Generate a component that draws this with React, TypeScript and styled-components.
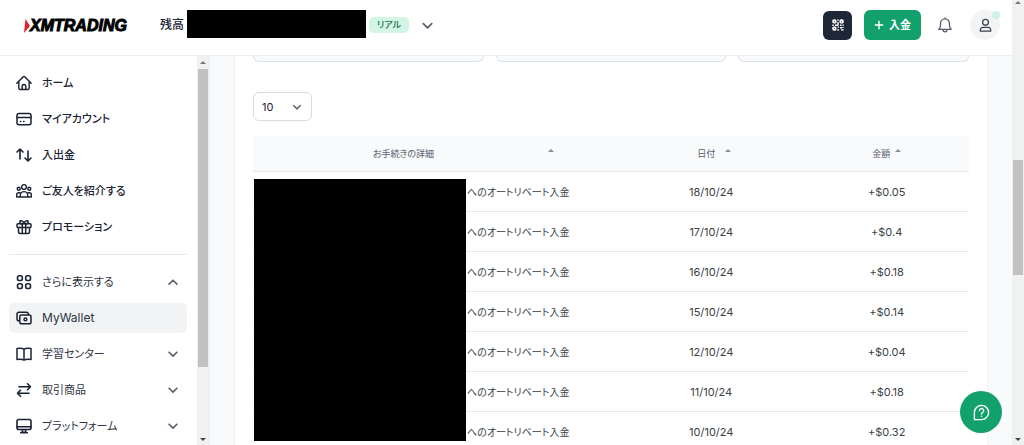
import React from "react";
import styled, { createGlobalStyle } from "styled-components";

const ink = "#1b2233";
const green = "#12a06d";
const line = "#e7e9ec";

const GlobalStyle = createGlobalStyle`
  * { box-sizing: border-box; }
  body {
    margin: 0;
    background: #fff;
    color: ${ink};
    font-family: Inter, "Noto Sans CJK JP", sans-serif;
    font-size: 12px;
    line-height: 16px;
    font-feature-settings: "palt";
  }
  button, select, input { font: inherit; color: inherit; font-feature-settings: inherit; }
  button { border: 0; padding: 0; background: none; cursor: pointer; }
  a { color: inherit; text-decoration: none; }
`;

const Page = styled.div`
  display: flex;
  height: 100vh;
  overflow: hidden;
`;

const AppColumn = styled.div`
  flex: 1;
  min-width: 0;
  display: flex;
  flex-direction: column;
`;

const Header = styled.header`
  flex: none;
  display: flex;
  align-items: center;
  height: 56px;
  padding: 0 12px 5px 24px;
  border-bottom: 1px solid #eceef1;
`;

const Logo = styled.a`
  display: flex;
  align-items: center;
  width: 136px;
  padding-top: 2px;
  font-family: "Liberation Sans", sans-serif;
  font-size: 16px;
  font-weight: 700;
  font-style: italic;
  color: #000;
  -webkit-text-stroke: 1px #000;
`;

const Account = styled.div`
  display: flex;
  align-items: center;
  gap: 3px;
  font-weight: 500;
`;

const BalanceMask = styled.span`
  width: 179px;
  height: 28px;
  margin-top: -2px;
  background: #000;
`;

const Badge = styled.span`
  padding: 0 8px;
  border-radius: 5px;
  background: #d3f5e5;
  color: #1d6b50;
  font-size: 9px;
  font-weight: 500;
`;

const Toggle = styled.button`
  display: flex;
  margin-left: 8px;
`;

const Actions = styled.div`
  display: flex;
  align-items: center;
  gap: 12px;
  margin-left: auto;
`;

const QrButton = styled.button`
  display: grid;
  place-items: center;
  width: 29px;
  height: 29px;
  border-radius: 6px;
  background: #1e2737;
`;

const DepositButton = styled.button`
  display: flex;
  align-items: center;
  justify-content: center;
  gap: 5px;
  width: 57px;
  height: 30px;
  border-radius: 6px;
  background: ${green};
  color: #fff;
  font-weight: 700;
  font-size: 11px;
`;

const BellButton = styled.button`
  display: grid;
  place-items: center;
  width: 24px;
  height: 24px;
  margin-right: 1px;
`;

const Avatar = styled.button`
  position: relative;
  display: grid;
  place-items: center;
  width: 30px;
  height: 30px;
  border-radius: 50%;
  background: #f3f4f5;
`;

const StatusDot = styled.span`
  position: absolute;
  top: 1px;
  right: 0;
  width: 8px;
  height: 8px;
  border-radius: 50%;
  background: #cff3e2;
`;

const Body = styled.div`
  flex: 1;
  min-height: 0;
  display: flex;
`;

const Sidebar = styled.aside`
  flex: none;
  display: flex;
  width: 210px;
  border-right: 1px solid #e9ecf0;
`;

const Nav = styled.nav`
  flex: 1;
  display: flex;
  flex-direction: column;
  overflow: hidden;
  padding: 12px 10px 0 9px;
`;

const NavList = styled.ul`
  display: flex;
  flex-direction: column;
  gap: 6px;
  margin: 0;
  padding: 0;
  list-style: none;
`;

const Divider = styled.hr`
  flex: none;
  width: 100%;
  height: 1px;
  margin: 12px 0;
  border: 0;
  background: ${line};
`;

const NavLink = styled.a<{ $active?: boolean; $strong?: boolean }>`
  display: flex;
  align-items: center;
  gap: 10px;
  height: 30px;
  padding: 0 7px;
  border-radius: 5px;
  background: ${(p) => (p.$active ? "#f1f3f5" : "transparent")};
  color: ${(p) => (p.$strong ? ink : "#2f3542")};
  font-weight: ${(p) => (p.$strong ? 500 : 400)};
`;

const NavLabel = styled.span<{ $latin?: boolean }>`
  flex: 1;
  font-size: ${(p) => (p.$latin ? 12 : 11)}px;
`;

const Track = styled.div<{ $width: number; $lead: number }>`
  flex: none;
  display: flex;
  flex-direction: column;
  align-items: center;
  width: ${(p) => p.$width}px;
  padding: ${(p) => p.$lead}px 0 3px;
  background: #f0f1f1;
`;

const Runway = styled.div`
  flex: 1;
  display: flex;
  flex-direction: column;
  align-items: center;
  align-self: stretch;
  margin: 5px 0;
`;

const Space = styled.div<{ $grow: number }>`
  flex: ${(p) => p.$grow} 0 0;
`;

const Thumb = styled.div<{ $grow: number }>`
  flex: ${(p) => p.$grow} 0 0;
  width: 10px;
  background: #c1c1c1;
`;

const Main = styled.main`
  flex: 1;
  min-width: 0;
  overflow: hidden;
  padding: 0 24px;
  background: #f8fafc;
`;

const Card = styled.section`
  min-height: 100%;
  padding: 0 18px;
  border: solid #f0f2f5;
  border-width: 0 1px;
  background: #fff;
`;

const Filters = styled.div`
  display: grid;
  grid-template-columns: repeat(3, 1fr);
  gap: 12px;
`;

const FilterEdge = styled.div`
  height: 6px;
  border: 1px solid #dfe3e8;
  border-top: 0;
  border-radius: 0 0 6px 6px;
  background: #f8fafc;
`;

const PageSize = styled.label`
  display: grid;
  align-items: center;
  width: 59px;
  margin: 30px 0 15px;
`;

const PageSizeSelect = styled.select`
  grid-area: 1 / 1;
  appearance: none;
  height: 29px;
  padding: 0 8px;
  border: 1px solid #d9dce1;
  border-radius: 6px;
  background: #fff;
  font-size: 11px;
`;

const SelectArrow = styled.span`
  grid-area: 1 / 1;
  justify-self: end;
  display: flex;
  padding-right: 9px;
  pointer-events: none;
`;

const TableArea = styled.div`
  position: relative;
`;

const Table = styled.table`
  width: 100%;
  border-collapse: separate;
  border-spacing: 0;
  table-layout: fixed;
`;

const HeadCell = styled.th<{ $share: number }>`
  width: ${(p) => p.$share}%;
  height: 36px;
  padding: 0;
  border-bottom: 1px solid ${line};
  background: #f8fafc;
  color: #59616e;
  font-size: 9px;
  font-weight: 400;
`;

const SortButton = styled.button<{ $wide?: boolean; $gap?: number; $inset?: number }>`
  display: flex;
  align-items: center;
  justify-content: center;
  gap: ${(p) => p.$gap ?? 10}px;
  width: ${(p) => (p.$wide ? "301px" : "100%")};
  padding-left: ${(p) => p.$inset ?? 0}px;
`;

const SortLabel = styled.span<{ $fill?: boolean }>`
  flex: ${(p) => (p.$fill ? 1 : "none")};
`;

const SortArrow = styled.span`
  display: flex;
  padding-bottom: 8px;
`;

const Cell = styled.td<{ $detail?: boolean }>`
  height: 40px;
  padding: 0 0 0 ${(p) => (p.$detail ? 214 : 0)}px;
  border-bottom: 1px solid ${line};
  color: #3a3f47;
  font-size: ${(p) => (p.$detail ? 10 : 11)}px;
  text-align: ${(p) => (p.$detail ? "left" : "center")};
`;

const DetailMask = styled.div`
  position: absolute;
  top: 43px;
  left: 1px;
  width: 212px;
  height: 262px;
  background: #000;
`;

const HelpButton = styled.button`
  position: fixed;
  right: 22px;
  bottom: 12px;
  display: grid;
  place-items: center;
  width: 42px;
  height: 42px;
  border-radius: 50%;
  background: ${green};
`;

type DrawingProps = { children: React.ReactNode; size?: number; color?: string; weight?: number };

const Drawing = ({ children, size = 16, color = ink, weight = 1.4 }: DrawingProps) => (
  <svg
    width={size}
    height={size}
    viewBox="0 0 16 16"
    fill="none"
    stroke={color}
    strokeWidth={weight}
    strokeLinecap="round"
    strokeLinejoin="round"
    aria-hidden="true"
  >
    {children}
  </svg>
);

const Chevron = ({ up = false, size = 14 }: { up?: boolean; size?: number }) => (
  <Drawing size={size} color="#5c626d" weight={1.9}>
    <path d={up ? "M3.5 10.5 8 6l4.5 4.5" : "M3.5 6 8 10.5 12.5 6"} />
  </Drawing>
);

const Triangle = ({ down = false, color = "#8a9099" }: { down?: boolean; color?: string }) => (
  <svg width="6" height="4" viewBox="0 0 6 4" aria-hidden="true">
    <path d={down ? "M0 0h6L3 3z" : "M0 4h6L3 1z"} fill={color} />
  </svg>
);

const icons = {
  home: (
    <Drawing>
      <path d="M.8 8.300 7 1.900a1.400 1.400 0 0 1 2 0l6.200 6.400M2.800 6.500V13a1.500 1.500 0 0 0 1.500 1.500h7.400a1.500 1.500 0 0 0 1.500-1.500V6.500" />
      <path d="M6.200 14.300v-3a1.800 1.800 0 0 1 3.600 0v3" />
    </Drawing>
  ),
  card: (
    <Drawing weight={1.500}>
      <rect x="1" y="2.500" width="14" height="11.300" rx="2" />
      <path d="M1 6.500h14M4.400 10.500h.4M7.600 10.500h.4" />
    </Drawing>
  ),
  transfer: (
    <Drawing weight={1.600}>
      <path d="M4 12V2M1 5l3-3 3 3M12 4v10M9 11l3 3 3-3" />
    </Drawing>
  ),
  people: (
    <Drawing weight={1.400}>
      <circle cx="8" cy="4" r="2.400" />
      <circle cx="2.700" cy="5.800" r="1.500" />
      <circle cx="13.300" cy="5.800" r="1.500" />
      <path d="M4.300 14v-1.700a3.700 3.700 0 0 1 7.400 0V14zM4 9.700H2.600A1.900 1.900 0 0 0 .7 11.600V14h3.600M12 9.700h1.400a1.900 1.900 0 0 1 1.900 1.900V14h-3.600" />
    </Drawing>
  ),
  gift: (
    <Drawing weight={1.500}>
      <rect x="1" y="4.800" width="14" height="3.600" rx="1" />
      <path d="M2.500 8.400V13A1.500 1.500 0 0 0 4 14.500h8a1.500 1.500 0 0 0 1.500-1.500V8.400M6.300 4.800v9.700M9.700 4.800v9.700M8 4.500C7 1.200 3.500.8 3.800 3.200c.1.900.7 1.400 1.400 1.600M8 4.500C9 1.200 12.500.8 12.200 3.200c-.1.900-.7 1.400-1.400 1.600" />
    </Drawing>
  ),
  grid: (
    <Drawing weight={1.600}>
      <rect x="1.500" y="1.700" width="4.800" height="4.800" rx="1.700" />
      <rect x="9.700" y="1.700" width="4.800" height="4.800" rx="1.700" />
      <rect x="1.500" y="9.700" width="4.800" height="4.800" rx="1.700" />
      <rect x="9.700" y="9.700" width="4.800" height="4.800" rx="1.700" />
    </Drawing>
  ),
  wallet: (
    <Drawing weight={1.500}>
      <path d="M3.300 10.800h-.5A1.800 1.800 0 0 1 1 9V4a1.800 1.800 0 0 1 1.800-1.800h7.700A1.800 1.800 0 0 1 12.300 4v.8" />
      <rect x="3.800" y="5" width="11.200" height="8.800" rx="1.800" />
      <circle cx="9.400" cy="9.400" r="1.400" />
    </Drawing>
  ),
  book: (
    <Drawing weight={1.500}>
      <path d="M8 3.200v10.300M8 3.200C6.500 2.300 4 2.200 1 2.500v11c3-.3 5.500-.2 7 .5 1.500-.7 4-.8 7-.5v-11c-3-.3-5.500-.2-7 .7z" />
    </Drawing>
  ),
  swap: (
    <Drawing weight={1.600}>
      <path d="M3 4.800h11.500M11.500 1.800l3 3-3 3M13 11.200H1.500M4.500 8.200l-3 3 3 3" />
    </Drawing>
  ),
  monitor: (
    <Drawing weight={1.600}>
      <rect x="1" y="1.500" width="14" height="10" rx="1.800" />
      <path d="M1 8.700h14M6.500 11.700v2.500M9.500 11.700v2.500M4.700 14.600h6.600" />
    </Drawing>
  ),
};

type NavItem = {
  label: string;
  icon: keyof typeof icons;
  active?: boolean;
  latin?: boolean;
  arrow?: "up" | "down";
};

const primaryItems: NavItem[] = [
  { label: "ホーム", icon: "home" },
  { label: "マイアカウント", icon: "card" },
  { label: "入出金", icon: "transfer" },
  { label: "ご友人を紹介する", icon: "people" },
  { label: "プロモーション", icon: "gift" },
];

const moreItems: NavItem[] = [
  { label: "さらに表示する", icon: "grid", arrow: "up" },
  { label: "MyWallet", icon: "wallet", active: true, latin: true },
  { label: "学習センター", icon: "book", arrow: "down" },
  { label: "取引商品", icon: "swap", arrow: "down" },
  { label: "プラットフォーム", icon: "monitor", arrow: "down" },
];

const rows = [
  ["18/10/24", "+$0.05"],
  ["17/10/24", "+$0.4"],
  ["16/10/24", "+$0.18"],
  ["15/10/24", "+$0.14"],
  ["12/10/24", "+$0.04"],
  ["11/10/24", "+$0.18"],
  ["10/10/24", "+$0.32"],
];

const NavGroup = ({ items, strong }: { items: NavItem[]; strong?: boolean }) => (
  <NavList>
    {items.map((item) => (
      <li key={item.label}>
        <NavLink href="#" $active={item.active} $strong={strong}>
          {icons[item.icon]}
          <NavLabel $latin={item.latin}>{item.label}</NavLabel>
          {item.arrow && <Chevron up={item.arrow === "up"} />}
        </NavLink>
      </li>
    ))}
  </NavList>
);

type ScrollbarProps = { width: number; lead: number; before: number; thumb: number; after: number };

const Scrollbar = ({ width, lead, before, thumb, after }: ScrollbarProps) => (
  <Track $width={width} $lead={lead} aria-hidden="true">
    <Triangle color="#777" />
    <Runway>
      <Space $grow={before} />
      <Thumb $grow={thumb} />
      <Space $grow={after} />
    </Runway>
    <Triangle down color="#444" />
  </Track>
);

export default function App() {
  return (
    <Page>
      <GlobalStyle />
      <AppColumn>
        <Header>
          <Logo href="#">
            <svg width="6" height="14" viewBox="0 0 6 14" aria-hidden="true">
              <path d="M1.500 0 6 7 0 14z" fill="#e0202f" />
            </svg>
            XMTRADING
          </Logo>
          <Account>
            残高
            <BalanceMask />
            <Badge>リアル</Badge>
            <Toggle aria-label="口座を選択">
              <Chevron size={15} />
            </Toggle>
          </Account>
          <Actions>
            <QrButton aria-label="QR">
              <svg width="12" height="12" viewBox="0 0 12 12" fill="none" stroke="#fff" strokeWidth="1.700" aria-hidden="true">
                <rect x="1.100" y="1.100" width="2.600" height="2.600" rx=".8" />
                <rect x="8.300" y="1.100" width="2.600" height="2.600" rx=".8" />
                <rect x="1.100" y="8.300" width="2.600" height="2.600" rx=".8" />
                <path d="M6 .5v1.500M6 3v3M.3 6.200h1.500M3 6.200h3.500M8 6.200h1.500M10.500 6.200h1.200M6.200 7.500v1.300M6.200 10v1.700M8 8.700h2M9 10.900h2.700M11 8v1" strokeWidth="1.400" />
              </svg>
            </QrButton>
            <DepositButton>
              <Drawing size={10} color="#fff" weight={2.200}>
                <path d="M8 2v12M2 8h12" />
              </Drawing>
              入金
            </DepositButton>
            <BellButton aria-label="お知らせ">
              <Drawing color="#555c68" weight={1.300}>
                <path d="M1.800 12.300h12.400c-1.300-1-1.700-2-1.700-3.500V6.400a4.500 4.500 0 0 0-9 0v2.400c0 1.500-.4 2.500-1.700 3.500zM8 1.800V.8M6 12.500a2 2.300 0 0 0 4 0" />
              </Drawing>
            </BellButton>
            <Avatar aria-label="プロフィール">
              <Drawing size={15} color="#3a404c">
                <circle cx="8" cy="4.600" r="3.100" />
                <path d="M2.500 14v-1.300a2.700 2.700 0 0 1 2.700-2.700h5.600a2.700 2.700 0 0 1 2.700 2.700V14z" />
              </Drawing>
              <StatusDot />
            </Avatar>
          </Actions>
        </Header>
        <Body>
          <Sidebar>
            <Nav>
              <NavGroup items={primaryItems} strong />
              <Divider />
              <NavGroup items={moreItems} />
            </Nav>
            <Scrollbar width={12} lead={4} before={0} thumb={298} after={66} />
          </Sidebar>
          <Main>
            <Card>
              <Filters>
                <FilterEdge />
                <FilterEdge />
                <FilterEdge />
              </Filters>
              <PageSize>
                <PageSizeSelect aria-label="表示件数" defaultValue="10">
                  <option>10</option>
                </PageSizeSelect>
                <SelectArrow>
                  <Chevron size={12} />
                </SelectArrow>
              </PageSize>
              <TableArea>
                <Table>
                  <thead>
                    <tr>
                      <HeadCell $share={51}>
                        <SortButton $wide $inset={16}>
                          <SortLabel $fill>お手続きの詳細</SortLabel>
                          <SortArrow>
                            <Triangle />
                          </SortArrow>
                        </SortButton>
                      </HeadCell>
                      <HeadCell $share={26}>
                        <SortButton $inset={6}>
                          <SortLabel>日付</SortLabel>
                          <SortArrow>
                            <Triangle />
                          </SortArrow>
                        </SortButton>
                      </HeadCell>
                      <HeadCell $share={23}>
                        <SortButton $gap={5}>
                          <SortLabel>金額</SortLabel>
                          <SortArrow>
                            <Triangle />
                          </SortArrow>
                        </SortButton>
                      </HeadCell>
                    </tr>
                  </thead>
                  <tbody>
                    {rows.map(([date, amount]) => (
                      <tr key={date}>
                        <Cell $detail>へのオートリベート入金</Cell>
                        <Cell>{date}</Cell>
                        <Cell>{amount}</Cell>
                      </tr>
                    ))}
                  </tbody>
                </Table>
                <DetailMask />
              </TableArea>
            </Card>
          </Main>
        </Body>
      </AppColumn>
      <Scrollbar width={12} lead={0} before={151} thumb={114} after={158} />
      <HelpButton aria-label="ヘルプ">
        <Drawing size={17} color="#fff" weight={1.300}>
          <path d="M1.300 14.700V8A6.700 6.700 0 1 1 8 14.700z" />
          <path d="M6 6.300a2 2 0 1 1 3 1.700c-.7.400-1 .8-1 1.400M8 11.500v.1" />
        </Drawing>
      </HelpButton>
    </Page>
  );
}
